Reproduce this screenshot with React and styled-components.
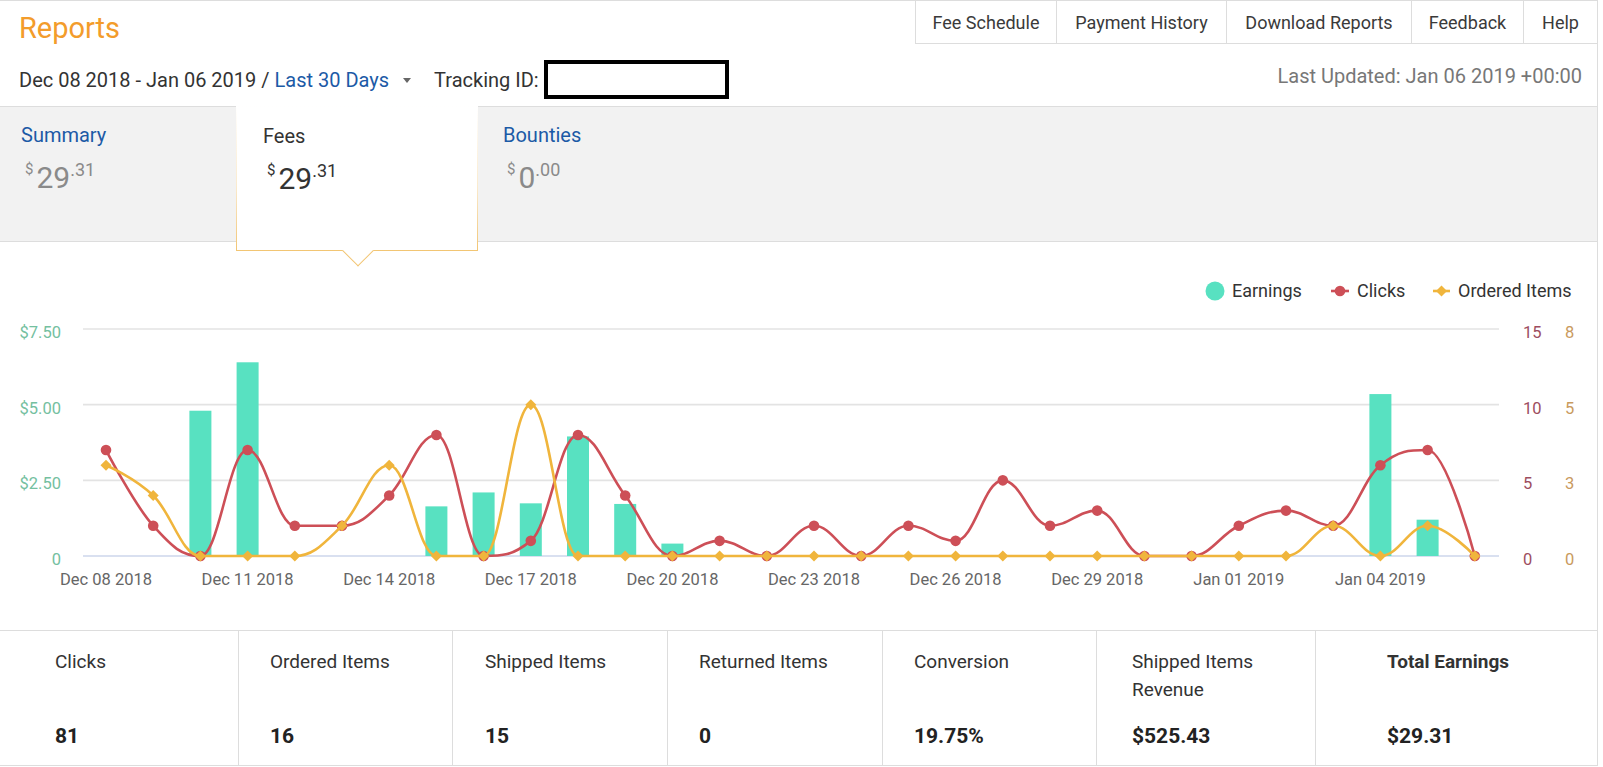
import styled, { createGlobalStyle } from "styled-components";

const GlobalStyle = createGlobalStyle`
  html, body {
    margin: 0;
    padding: 0;
    background: #fff;
  }
  body {
    font-family: Roboto, "Liberation Sans", Arial, sans-serif;
    color: #333;
    overflow: hidden;
  }
  * {
    box-sizing: border-box;
  }
`;

const Page = styled.div`
  width: 1598px;
  border-top: 1px solid #ddd;
  border-right: 1px solid #ddd;
`;

const TopRow = styled.div`
  display: flex;
  justify-content: space-between;
  height: 43px;
`;

const Title = styled.h1`
  margin: 0;
  padding: 13px 0 0 19px;
  font-size: 29px;
  line-height: 29px;
  font-weight: 400;
  color: #f39c2b;
`;

const Links = styled.nav`
  display: flex;
`;

const LinkTab = styled.div`
  width: ${(p) => p.w}px;
  height: 43px;
  display: flex;
  align-items: center;
  justify-content: center;
  border-left: 1px solid #ddd;
  border-bottom: 1px solid #ddd;
  font-size: 18px;
  color: #3a3a3a;
  white-space: nowrap;
`;

const DateRow = styled.div`
  height: 63px;
  padding: 9px 15px 0 19px;
  display: flex;
  align-items: center;
  border-bottom: 1px solid #ddd;
  font-size: 20px;
  white-space: nowrap;
`;

const Range = styled.span`
  color: #333;
`;

const RangeLink = styled.span`
  color: #1c5aa6;
`;

const Caret = styled.span`
  width: 0;
  height: 0;
  margin: 2px 23px 0 14px;
  border-left: 4.5px solid transparent;
  border-right: 4.5px solid transparent;
  border-top: 5px solid #666;
`;

const TrackingLabel = styled.span`
  color: #333;
  margin-right: 5px;
`;

const TrackingBox = styled.div`
  width: 185px;
  height: 39px;
  border: 4px solid #000;
  background: #fff;
`;

const Updated = styled.span`
  margin-left: auto;
  margin-bottom: 7px;
  color: #777;
`;

const Band = styled.div`
  display: flex;
  align-items: flex-start;
  height: 135px;
  background: #f2f2f2;
  border-bottom: 1px solid #ddd;
`;

const SummaryTab = styled.div`
  width: ${(p) => p.w}px;
  padding: 16px 0 0 ${(p) => p.pad}px;
`;

const ActiveTab = styled.div`
  position: relative;
  z-index: 2;
  width: 242px;
  height: 145px;
  margin: -1px 0 -9px;
  padding: 17px 0 0 26px;
  background: #fff;
  border: 1px solid;
  border-image: linear-gradient(
      to bottom,
      rgba(242, 197, 115, 0) 0%,
      rgba(242, 197, 115, 0.35) 55%,
      #f2c573 100%
    )
    1;

  &::after {
    content: "";
    position: absolute;
    left: 110px;
    bottom: -11.5px;
    width: 21px;
    height: 21px;
    background: #fff;
    border-right: 1px solid #f2c573;
    border-bottom: 1px solid #f2c573;
    transform: rotate(45deg);
  }
`;

const TabName = styled.div`
  font-size: 20px;
  line-height: 24px;
  color: ${(p) => (p.active ? "#333" : "#1c5aa6")};
`;

const Amount = styled.div`
  display: flex;
  align-items: flex-start;
  margin: 16px 0 0 4px;
  color: ${(p) => (p.active ? "#333" : "#8a8a8a")};
`;

const Dollar = styled.span`
  font-size: 15px;
  line-height: 15px;
  margin: -1px 3px 0 0;
`;

const Whole = styled.span`
  font-size: 30px;
  line-height: 30px;
`;

const Cents = styled.span`
  font-size: 18px;
  line-height: 18px;
  margin-top: -2px;
`;

const ChartSection = styled.div`
  height: 388px;
`;

const ChartSvg = styled.svg`
  display: block;
  font-family: Roboto, "Liberation Sans", Arial, sans-serif;
`;

const Stats = styled.div`
  display: grid;
  grid-template-columns: 238px 214px 215px 215px 214px 219px 1fr;
  border-top: 1px solid #ddd;
  border-bottom: 1px solid #ddd;
`;

const Stat = styled.div`
  height: 134px;
  padding: 17px 30px 0 ${(p) => p.pad}px;
  border-left: ${(p) => (p.first ? "none" : "1px solid #ddd")};
`;

const StatLabel = styled.div`
  height: 56px;
  font-size: 19px;
  line-height: 28px;
  color: #333;
  font-weight: ${(p) => (p.bold ? 700 : 400)};
`;

const StatValue = styled.div`
  margin-top: 18px;
  font-size: 21px;
  line-height: 28px;
  font-weight: 700;
  color: #222;
`;

const links = [
  ["Fee Schedule", 141],
  ["Payment History", 170],
  ["Download Reports", 185],
  ["Feedback", 112],
  ["Help", 74],
];

const days = [
  ...Array.from({ length: 24 }, (_, i) => `Dec ${String(8 + i).padStart(2, "0")} 2018`),
  ...Array.from({ length: 6 }, (_, i) => `Jan 0${1 + i} 2019`),
];

const clicks = [7, 2, 0, 7, 2, 2, 4, 8, 0, 1, 8, 4, 0, 1, 0, 2, 0, 2, 1, 5, 2, 3, 0, 0, 2, 3, 2, 6, 7, 0];
const items = [3, 2, 0, 0, 0, 1, 3, 0, 0, 5, 0, 0, 0, 0, 0, 0, 0, 0, 0, 0, 0, 0, 0, 0, 0, 0, 1, 0, 1, 0];
const earnings = {
  2: 4.8, 3: 6.4, 7: 1.64, 8: 2.1, 9: 1.74, 10: 3.95, 11: 1.72, 12: 0.41, 27: 5.35, 28: 1.2,
};

const stats = [
  { label: "Clicks", value: "81", pad: 55 },
  { label: "Ordered Items", value: "16", pad: 31 },
  { label: "Shipped Items", value: "15", pad: 32 },
  { label: "Returned Items", value: "0", pad: 31 },
  { label: "Conversion", value: "19.75%", pad: 31 },
  { label: "Shipped Items Revenue", value: "$525.43", pad: 35 },
  { label: "Total Earnings", value: "$29.31", pad: 71, bold: true },
];

const TEAL = "#58e1c1";
const RED = "#cd4f57";
const ORANGE = "#f0b53c";
const TOP = 87;
const BOTTOM = 314;
const X0 = 106;
const DX = 47.2;

const px = (i) => X0 + i * DX;
const py = (v, max) => BOTTOM - (v / max) * (BOTTOM - TOP);

// highcharts-like spline
function spline(pts) {
  const ctl = pts.map(([x, y], i) => {
    const prev = pts[i - 1];
    const next = pts[i + 1];
    if (!prev || !next) return null;
    const s = 1.5;
    const d = s + 1;
    const lx = (s * x + prev[0]) / d;
    let ly = (s * y + prev[1]) / d;
    const rx = (s * x + next[0]) / d;
    let ry = (s * y + next[1]) / d;
    const corr = ((ry - ly) * (rx - x)) / (rx - lx) + y - ry;
    ly += corr;
    ry += corr;
    if (ly > prev[1] && ly > y) {
      ly = Math.max(prev[1], y);
      ry = 2 * y - ly;
    } else if (ly < prev[1] && ly < y) {
      ly = Math.min(prev[1], y);
      ry = 2 * y - ly;
    }
    if (ry > next[1] && ry > y) {
      ry = Math.max(next[1], y);
      ly = 2 * y - ry;
    } else if (ry < next[1] && ry < y) {
      ry = Math.min(next[1], y);
      ly = 2 * y - ry;
    }
    return { lx, ly, rx, ry };
  });
  let d = `M${pts[0][0]},${pts[0][1]}`;
  for (let i = 1; i < pts.length; i++) {
    const a = ctl[i - 1];
    const b = ctl[i];
    const [x0, y0] = pts[i - 1];
    const [x1, y1] = pts[i];
    d += ` C${a ? a.rx : x0},${a ? a.ry : y0} ${b ? b.lx : x1},${b ? b.ly : y1} ${x1},${y1}`;
  }
  return d;
}

const Diamond = ({ x, y, r = 5.5 }) => (
  <path d={`M${x},${y - r} L${x + r},${y} L${x},${y + r} L${x - r},${y} Z`} fill={ORANGE} />
);

const Chart = () => {
  const clickPts = clicks.map((v, i) => [px(i), py(v, 15)]);
  const itemPts = items.map((v, i) => [px(i), py(v, 7.5)]);
  const grid = [0, 1, 2, 3].map((k) => TOP + (k * (BOTTOM - TOP)) / 3);
  const left = ["$7.50", "$5.00", "$2.50", "0"];
  const right1 = ["15", "10", "5", "0"];
  const right2 = ["8", "5", "3", "0"];

  return (
    <ChartSvg width="1597" height="388" viewBox="0 0 1597 388">
      {grid.slice(0, 3).map((y) => (
        <line key={y} x1="83" x2="1499" y1={y} y2={y} stroke="#e3e3e3" strokeWidth="1.6" />
      ))}
      <line x1="83" x2="1499" y1={BOTTOM} y2={BOTTOM} stroke="#ccd6eb" strokeWidth="1.6" />

      {grid.map((y, k) => (
        <g key={k} fontSize="16.5">
          <text x="61" y={y + 9} textAnchor="end" fill="#74c0a0">{left[k]}</text>
          <text x="1523" y={y + 9} fill="#9d4d60">{right1[k]}</text>
          <text x="1565" y={y + 9} fill="#c99a5e">{right2[k]}</text>
        </g>
      ))}

      {days.map((d, i) =>
        i % 3 === 0 ? (
          <text key={d} x={px(i)} y="343" textAnchor="middle" fontSize="16.5" fill="#666">
            {d}
          </text>
        ) : null
      )}

      {Object.entries(earnings).map(([i, v]) => (
        <rect key={i} x={px(+i) - 11} y={py(v, 7.5)} width="22" height={BOTTOM - py(v, 7.5)} fill={TEAL} />
      ))}

      <path d={spline(clickPts)} fill="none" stroke={RED} strokeWidth="2.6" />
      {clickPts.map(([x, y], i) => (
        <circle key={i} cx={x} cy={y} r="5.3" fill={RED} />
      ))}

      <path d={spline(itemPts)} fill="none" stroke={ORANGE} strokeWidth="2.6" />
      {itemPts.map(([x, y], i) => (
        <Diamond key={i} x={x} y={y} />
      ))}

      <g fontSize="18" fill="#333">
        <circle cx="1215" cy="49" r="9.5" fill={TEAL} />
        <text x="1232" y="55">Earnings</text>
        <line x1="1331" x2="1349" y1="49" y2="49" stroke={RED} strokeWidth="2.6" />
        <circle cx="1340" cy="49" r="5.3" fill={RED} />
        <text x="1357" y="55">Clicks</text>
        <line x1="1433" x2="1450" y1="49" y2="49" stroke={ORANGE} strokeWidth="2.6" />
        <Diamond x={1441.5} y={49} />
        <text x="1458" y="55">Ordered Items</text>
      </g>
    </ChartSvg>
  );
};

const Money = ({ whole, cents, active }) => (
  <Amount active={active}>
    <Dollar>$</Dollar>
    <Whole>{whole}</Whole>
    <Cents>.{cents}</Cents>
  </Amount>
);

const App = () => (
  <>
    <GlobalStyle />
    <Page>
      <TopRow>
        <Title>Reports</Title>
        <Links>
          {links.map(([name, w]) => (
            <LinkTab key={name} w={w}>
              {name}
            </LinkTab>
          ))}
        </Links>
      </TopRow>

      <DateRow>
        <Range>Dec 08 2018 - Jan 06 2019 /&nbsp;</Range>
        <RangeLink>Last 30 Days</RangeLink>
        <Caret />
        <TrackingLabel>Tracking ID:</TrackingLabel>
        <TrackingBox />
        <Updated>Last Updated: Jan 06 2019 +00:00</Updated>
      </DateRow>

      <Band>
        <SummaryTab w={236} pad={21}>
          <TabName>Summary</TabName>
          <Money whole="29" cents="31" />
        </SummaryTab>
        <ActiveTab>
          <TabName active>Fees</TabName>
          <Money whole="29" cents="31" active />
        </ActiveTab>
        <SummaryTab w={300} pad={25}>
          <TabName>Bounties</TabName>
          <Money whole="0" cents="00" />
        </SummaryTab>
      </Band>

      <ChartSection>
        <Chart />
      </ChartSection>

      <Stats>
        {stats.map((s, i) => (
          <Stat key={s.label} pad={s.pad} first={i === 0}>
            <StatLabel bold={s.bold}>{s.label}</StatLabel>
            <StatValue>{s.value}</StatValue>
          </Stat>
        ))}
      </Stats>
    </Page>
  </>
);

export default App;
